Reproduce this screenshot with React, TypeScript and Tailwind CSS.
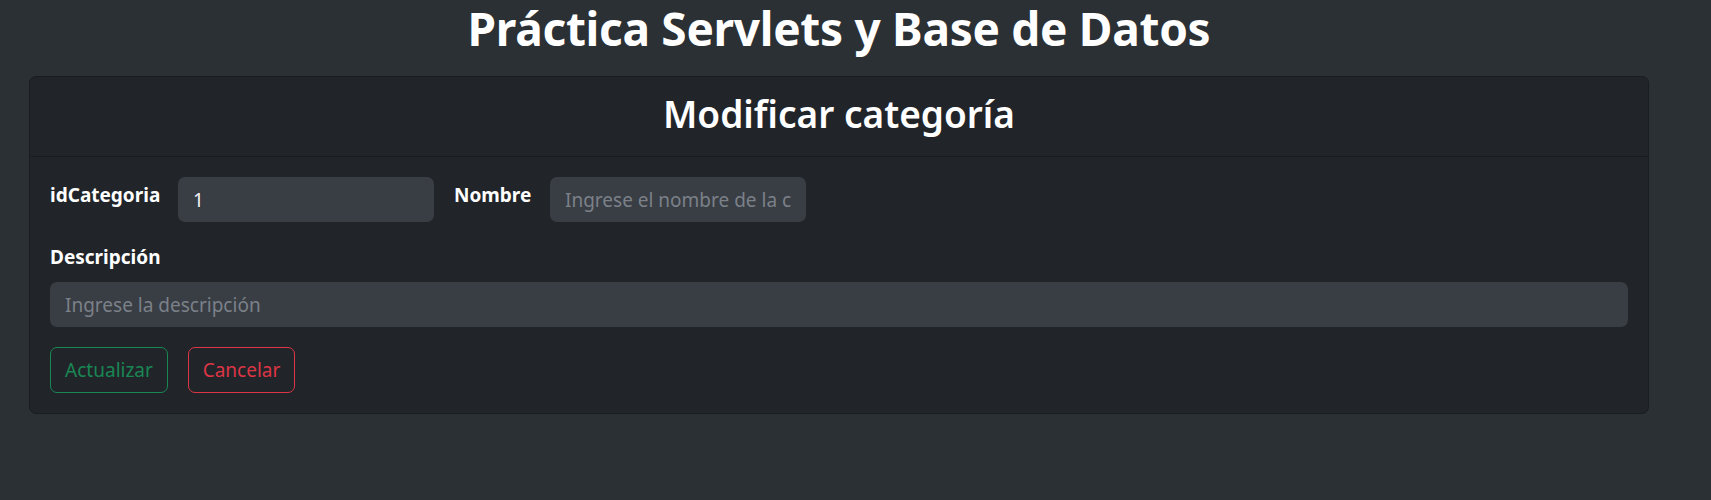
import React from "react";

const font = { fontFamily: '"Noto Sans", "Open Sans", sans-serif' };

export default function App() {
  return (
    <div className="min-h-[500px] bg-[#2b3035] pl-[29px] pr-[62px] pt-[1px] text-[#dee2e6]" style={font}>
      <h1 className="mb-[21px] text-center text-[46px] font-bold leading-[54px] tracking-[-0.3px] text-white">
        Práctica Servlets y Base de Datos
      </h1>

      <div className="rounded-[7px] border border-[#1a1d20] bg-[#212529]">
        <div className="flex h-[80px] items-center justify-center border-b border-[#1a1d20] pb-[5px]">
          <h2 className="text-[37px] font-semibold leading-[46px] text-white">
            Modificar categoría
          </h2>
        </div>

        <form className="p-[20px]">
          <div className="flex items-start gap-[20px]">
            <label className="w-[108px] pt-[4px] text-[19px] font-bold leading-[29px] text-white">
              idCategoria
            </label>
            <input
              className="h-[45px] w-[256px] rounded-[7px] bg-[#393d44] px-[15px] text-[19px] text-[#f1f3f5] outline-none placeholder:text-[#7b8189]"
              defaultValue="1"
            />
            <label className="w-[76px] pt-[4px] text-[19px] font-bold leading-[29px] text-white">
              Nombre
            </label>
            <input
              className="h-[45px] w-[256px] rounded-[7px] bg-[#393d44] px-[15px] text-[19px] text-[#f1f3f5] outline-none placeholder:text-[#7b8189]"
              placeholder="Ingrese el nombre de la categoría"
            />
          </div>

          <div className="mt-[21px]">
            <label className="mb-[10px] block text-[19px] font-bold leading-[29px] text-white">
              Descripción
            </label>
            <input
              className="block h-[45px] w-full rounded-[7px] bg-[#393d44] px-[15px] text-[19px] text-[#f1f3f5] outline-none placeholder:text-[#7b8189]"
              placeholder="Ingrese la descripción"
            />
          </div>

          <div className="mt-[20px] flex gap-[20px]">
            <button
              type="button"
              className="h-[46px] w-[118px] rounded-[7px] border border-[#198754] text-[19px] text-[#198754]"
            >
              Actualizar
            </button>
            <button
              type="button"
              className="h-[46px] w-[107px] rounded-[7px] border border-[#dc3545] text-[19px] text-[#dc3545]"
            >
              Cancelar
            </button>
          </div>
        </form>
      </div>
    </div>
  );
}
